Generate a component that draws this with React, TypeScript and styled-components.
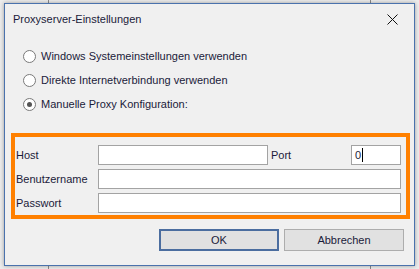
import React from 'react';
import styled, { createGlobalStyle } from 'styled-components';

const GlobalStyle = createGlobalStyle`
	html, body {
		margin: 0;
		padding: 0;
		background: #e9e9e9;
	}
	* {
		box-sizing: border-box;
	}
`;

const Desktop = styled.div`
	width: 419px;
	height: 269px;
	padding: 3px 4px 3px 4px;
	overflow: hidden;
	background:
		linear-gradient(#8a8a8a, #8a8a8a) 48px 0 / 1px 100% no-repeat,
		linear-gradient(#8a8a8a, #8a8a8a) 370px 0 / 1px 100% no-repeat,
		#ececec;
	font-family: 'Liberation Sans', Arial, sans-serif;
	font-size: 11px;
	color: #111;
`;

const Window = styled.div`
	width: 411px;
	height: 263px;
	background: #f0f0f0;
	border: 1px solid #4a72ad;
	box-shadow: 0 0 4px rgba(0, 0, 0, 0.35);
	display: flex;
	flex-direction: column;
`;

const TitleBar = styled.div`
	height: 30px;
	display: flex;
	align-items: center;
	justify-content: space-between;
	padding: 0 16px 0 8px;
	font-size: 11px;
	color: #1b1b3a;
`;

const CloseIcon = () => (
	<svg width="11" height="11" viewBox="0 0 11 11">
		<path d="M0.5 0.5 L10.5 10.5 M10.5 0.5 L0.5 10.5" stroke="#111" strokeWidth="1" fill="none" />
	</svg>
);

const RadioGroup = styled.div`
	display: flex;
	flex-direction: column;
	padding: 10px 0 0 18px;
`;

const RadioRow = styled.label`
	height: 24px;
	display: flex;
	align-items: center;
	gap: 5px;
	color: #1b1b3a;
`;

const RadioCircle = styled.span<{ $checked?: boolean }>`
	width: 13px;
	height: 13px;
	border-radius: 50%;
	border: 1px solid #7a7a7a;
	background: #fff;
	display: flex;
	align-items: center;
	justify-content: center;

	&::after {
		content: '';
		width: 5px;
		height: 5px;
		border-radius: 50%;
		background: ${(p) => (p.$checked ? '#555' : 'transparent')};
	}
`;

const ProxyBox = styled.div`
	margin: 17px 4px 0 6px;
	border: 4px solid #ff8000;
	padding: 8px 3px 2px 1px;
	display: grid;
	grid-template-columns: 82px 170px 83px 50px;
	grid-auto-rows: 20px;
	column-gap: 0;
	row-gap: 4px;
	align-items: center;
`;

const FieldLabel = styled.span<{ $pad?: number }>`
	padding-left: ${(p) => p.$pad ?? 0}px;
	color: #1b1b3a;
`;

const TextBox = styled.div<{ $span?: number }>`
	grid-column: span ${(p) => p.$span ?? 1};
	height: 20px;
	border: 1px solid #a3a3a3;
	background: #fff;
	display: flex;
	align-items: center;
	padding-left: 3px;
	color: #1b1b3a;
`;

const Caret = styled.span`
	width: 1px;
	height: 14px;
	background: #000;
	margin-left: 1px;
`;

const ButtonRow = styled.div`
	display: flex;
	justify-content: flex-end;
	gap: 5px;
	padding: 10px 10px 0 0;
`;

const DialogButton = styled.button<{ $default?: boolean }>`
	width: 120px;
	height: 22px;
	background: #e1e1e1;
	border: ${(p) => (p.$default ? '2px solid #4b6d9f' : '1px solid #adadad')};
	font-family: inherit;
	font-size: 11px;
	color: #1b1b3a;
	padding: 0;
`;

export default function App() {
	return (
		<>
			<GlobalStyle />
			<Desktop>
				<Window>
					<TitleBar>
						<span>Proxyserver-Einstellungen</span>
						<CloseIcon />
					</TitleBar>
					<RadioGroup>
						<RadioRow>
							<RadioCircle />
							Windows Systemeinstellungen verwenden
						</RadioRow>
						<RadioRow>
							<RadioCircle />
							Direkte Internetverbindung verwenden
						</RadioRow>
						<RadioRow>
							<RadioCircle $checked />
							Manuelle Proxy Konfiguration:
						</RadioRow>
					</RadioGroup>
					<ProxyBox>
						<FieldLabel>Host</FieldLabel>
						<TextBox />
						<FieldLabel $pad={3}>Port</FieldLabel>
						<TextBox>
							0<Caret />
						</TextBox>
						<FieldLabel>Benutzername</FieldLabel>
						<TextBox $span={3} />
						<FieldLabel>Passwort</FieldLabel>
						<TextBox $span={3} />
					</ProxyBox>
					<ButtonRow>
						<DialogButton $default>OK</DialogButton>
						<DialogButton>Abbrechen</DialogButton>
					</ButtonRow>
				</Window>
			</Desktop>
		</>
	);
}
